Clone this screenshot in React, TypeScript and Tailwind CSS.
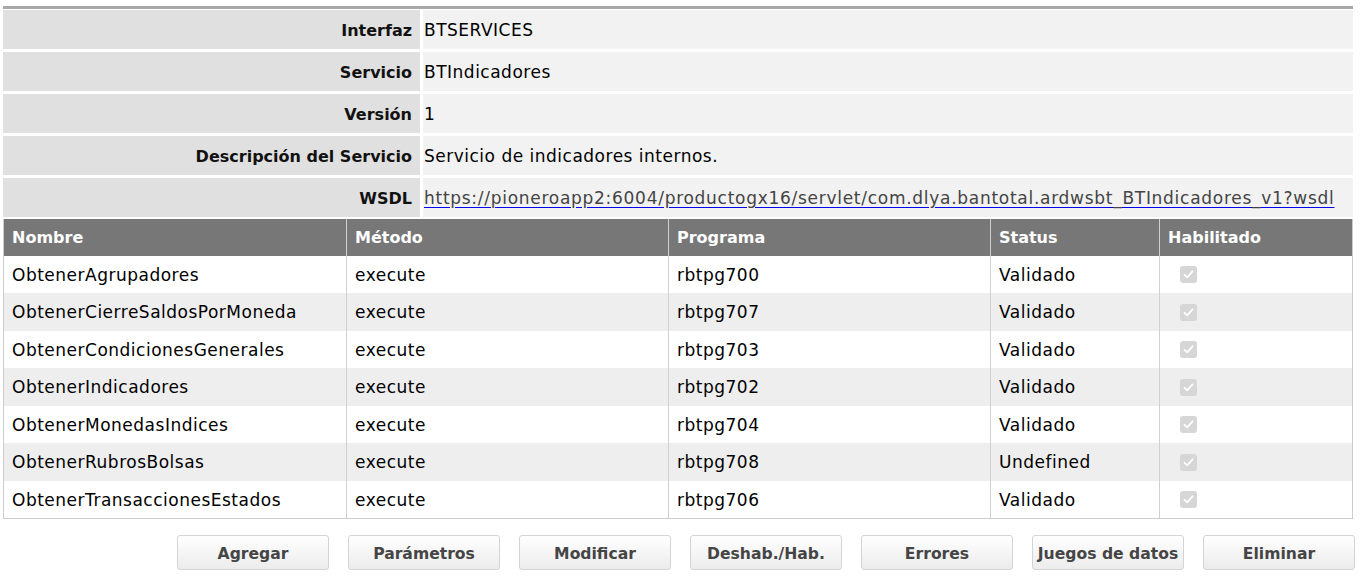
import React from "react";

const info = [
  { label: "Interfaz", value: "BTSERVICES" },
  { label: "Servicio", value: "BTIndicadores" },
  { label: "Versión", value: "1" },
  { label: "Descripción del Servicio", value: "Servicio de indicadores internos." },
];

const rows = [
  ["ObtenerAgrupadores", "execute", "rbtpg700", "Validado"],
  ["ObtenerCierreSaldosPorMoneda", "execute", "rbtpg707", "Validado"],
  ["ObtenerCondicionesGenerales", "execute", "rbtpg703", "Validado"],
  ["ObtenerIndicadores", "execute", "rbtpg702", "Validado"],
  ["ObtenerMonedasIndices", "execute", "rbtpg704", "Validado"],
  ["ObtenerRubrosBolsas", "execute", "rbtpg708", "Undefined"],
  ["ObtenerTransaccionesEstados", "execute", "rbtpg706", "Validado"],
];

const buttons = ["Agregar", "Parámetros", "Modificar", "Deshab./Hab.", "Errores", "Juegos de datos", "Eliminar"];

function Check() {
  return (
    <div className="w-[17px] h-[17px] rounded-[3px] bg-[#d6d6d6] flex items-center justify-center">
      <svg width="13" height="13" viewBox="0 0 13 13">
        <path d="M2.5 6.8 L5.2 9.3 L10.5 3.3" fill="none" stroke="#ffffff" strokeWidth="1.8" strokeLinecap="round" strokeLinejoin="round" />
      </svg>
    </div>
  );
}

export default function App() {
  const font = { fontFamily: '"DejaVu Sans", Verdana, sans-serif' };
  const reg = "text-[17px] tracking-[0.5px]";
  return (
    <div className="w-[1371px] h-[588px] bg-white text-[16px] text-black" style={font}>
      <div className="pt-[6px] pl-[3px] w-[1353px]">
        <div className="h-[3px] bg-[#a8a8a8] mb-[1px]" />
        <div className="flex flex-col gap-[3px]">
          {info.map((r) => (
            <div key={r.label} className="flex h-[39px] gap-[3px]">
              <div className="w-[417px] bg-[#e0e0e0] flex items-center justify-end pr-[8px] pt-[2px] font-bold text-[#111]">
                {r.label}
              </div>
              <div className={`flex-1 bg-[#f2f2f2] flex items-center pl-[1px] pt-[2px] ${reg}`}>{r.value}</div>
            </div>
          ))}
          <div className="flex h-[39px] gap-[3px]">
            <div className="w-[417px] bg-[#e0e0e0] flex items-center justify-end pr-[8px] pt-[2px] font-bold text-[#111]">WSDL</div>
            <div className="flex-1 bg-[#f2f2f2] flex items-center pl-[1px] pt-[2px] text-[17px] tracking-[0.72px]">
              <span className="text-[#444] underline decoration-[#0000ee] underline-offset-[3px]">
                https://pioneroapp2:6004/productogx16/servlet/com.dlya.bantotal.ardwsbt_BTIndicadores_v1?wsdl
              </span>
            </div>
          </div>
        </div>
        <div className="mt-[2px] border-l border-r border-b border-[#cccccc]">
          <div className="grid grid-cols-[342px_322px_322px_169px_1fr] bg-[#777777] h-[37px] text-white font-bold">
            {["Nombre", "Método", "Programa", "Status", "Habilitado"].map((h, i) => (
              <div key={h} className={`flex items-center pl-[8px] pt-[1px] ${i > 0 ? "border-l border-[#d0d0d0]" : ""}`}>
                {h}
              </div>
            ))}
          </div>
          {rows.map((r, idx) => (
            <div
              key={r[0]}
              className={`grid grid-cols-[342px_322px_322px_169px_1fr] ${idx % 2 === 1 ? "bg-[#eeeeee]" : "bg-white"} ${idx % 2 === 0 ? "h-[37px]" : "h-[38px]"}`}
            >
              {r.map((c, i) => (
                <div key={i} className={`flex items-center pl-[8px] pt-[2px] ${reg} ${i > 0 ? "border-l border-[#d0d0d0]" : ""}`}>
                  {c}
                </div>
              ))}
              <div className="flex items-center pl-[20px] border-l border-[#d0d0d0]">
                <Check />
              </div>
            </div>
          ))}
        </div>
        <div className="flex justify-end gap-[19px] mt-[16px] pr-0 w-[1352px]">
          {buttons.map((b) => (
            <button
              key={b}
              className="w-[152px] h-[35px] rounded-[3px] border border-[#d4d4d4] bg-gradient-to-b from-white to-[#ececec] font-bold text-[#454545] text-[15.6px] pt-[4px]"
              style={font}
            >
              {b}
            </button>
          ))}
        </div>
      </div>
    </div>
  );
}
